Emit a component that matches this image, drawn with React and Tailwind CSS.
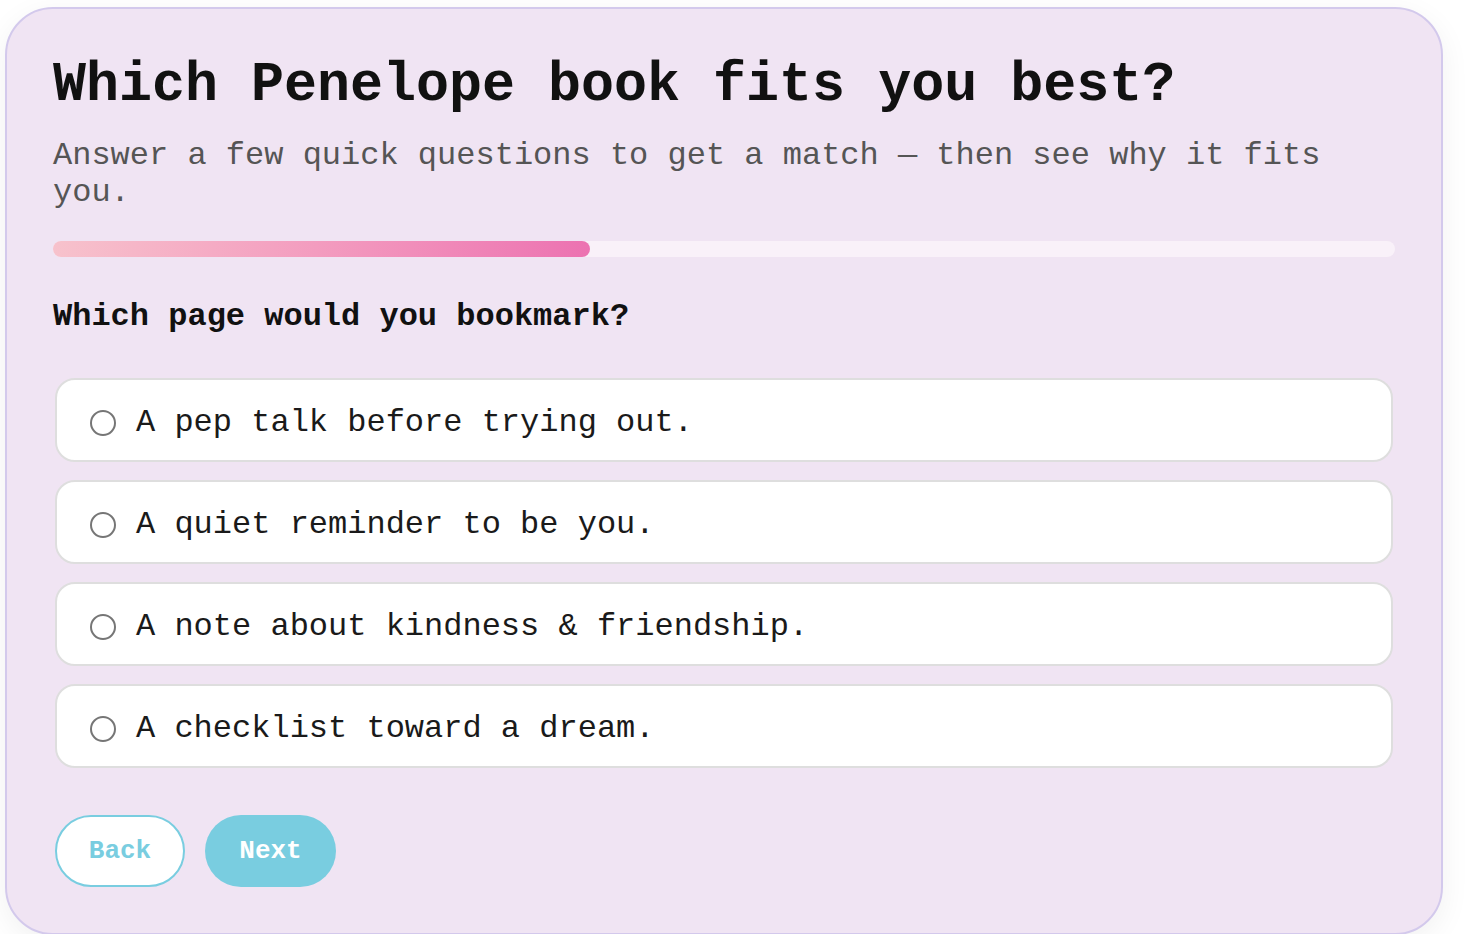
import React, { useState } from 'react';

const options = [
  'A pep talk before trying out.',
  'A quiet reminder to be you.',
  'A note about kindness & friendship.',
  'A checklist toward a dream.',
];

export default function App() {
  const [picked, setPicked] = useState(null);
  const progress = 40;

  return (
    <div className="min-h-screen bg-white pl-[5px] pt-[7px] font-['Courier_New','Liberation_Mono',monospace]">
      <div className="w-[1438px] rounded-[48px] border-2 border-[#d3c9ec] bg-[#f0e4f3] px-[46px] pt-[45px] pb-[46px] shadow-[0_8px_30px_rgba(0,0,0,0.06)]">
        {/* Heading */}
        <h1 className="text-[55px] leading-[64px] font-bold text-[#111]">Which Penelope book fits you best?</h1>
        <p className="mt-[19px] text-[32px] leading-[37px] text-[#555]">
          Answer a few quick questions to get a match — then see why it fits you.
        </p>

        {/* Progress */}
        <div className="mt-[30px] h-4 w-full rounded-full bg-[#f9f1f9]">
          <div
            className="h-4 rounded-full bg-gradient-to-r from-[#f7c2cc] to-[#ec72b1]"
            style={{ width: `${progress}%` }}
          />
        </div>

        {/* Question */}
        <h2 className="mt-[42px] text-[32px] leading-[36px] font-bold text-[#111]">Which page would you bookmark?</h2>

        <div className="mt-[43px] flex flex-col gap-[18px] pl-[2px] pr-[2px]">
          {options.map((opt, i) => (
            <label
              key={opt}
              className="flex h-[84px] cursor-pointer items-center gap-5 rounded-[20px] border-2 border-[#dedede] bg-white pl-[33px] pt-[6px]"
              onClick={() => setPicked(i)}
            >
              <span className="flex h-[26px] w-[26px] items-center justify-center rounded-full border-2 border-[#767676] bg-white">
                {picked === i && <span className="h-3 w-3 rounded-full bg-[#767676]" />}
              </span>
              <span className="text-[32px] leading-[36px] text-[#1a1a1a]">{opt}</span>
            </label>
          ))}
        </div>

        {/* Actions */}
        <div className="mt-[47px] flex gap-5 pl-[2px]">
          <button
            type="button"
            className="h-[72px] w-[130px] rounded-full border-2 border-[#79cde0] bg-white text-[26px] font-bold text-[#79cde0]"
          >
            Back
          </button>
          <button
            type="button"
            className="h-[72px] w-[131px] rounded-full bg-[#79cde0] text-[26px] font-bold text-white"
          >
            Next
          </button>
        </div>
      </div>
    </div>
  );
}
